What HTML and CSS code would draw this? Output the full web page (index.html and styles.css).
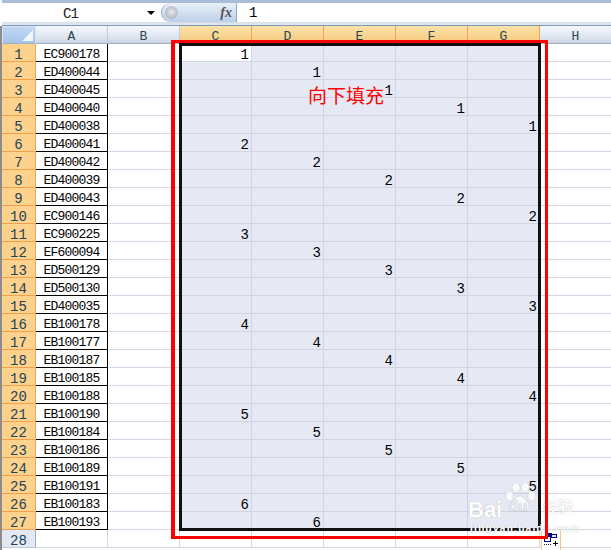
FILE: index.html
```html
<!DOCTYPE html>
<html lang="zh">
<head>
<meta charset="utf-8">
<title>向下填充</title>
<link rel="stylesheet" href="styles.css">
</head>
<body>
<div class="formula">
  <div class="namebox"><span class="name">C1</span><span class="arrow"></span></div>
  <div class="pill"><span class="knob"></span><span class="fx">fx</span></div>
  <div class="input">1</div>
</div>
<div class="gap"></div>
<div class="sheet">
  <table class="grid">
    <colgroup><col class="c0"><col class="cw"><col class="cw"><col class="cw"><col class="cw"><col class="cw"><col class="cw"><col class="cw"><col class="cw"></colgroup>
    <thead>
      <tr>
        <th class="corner"><svg width="32" height="16" viewBox="0 0 32 16"><polygon points="30,3 30,14 19,14" fill="#f2f6fb"/></svg></th>
        <th>A</th><th>B</th><th class="on">C</th><th class="on">D</th><th class="on">E</th><th class="on">F</th><th class="on">G</th><th>H</th>
      </tr>
    </thead>
    <tbody>
      <tr><th class="rh">1</th><td class="id">EC900178</td><td></td><td class="first">1</td><td class="s"></td><td class="s"></td><td class="s"></td><td class="s"></td><td></td></tr>
      <tr><th class="rh">2</th><td class="id">ED400044</td><td></td><td class="s"></td><td class="s">1</td><td class="s"></td><td class="s"></td><td class="s"></td><td></td></tr>
      <tr><th class="rh">3</th><td class="id">ED400045</td><td></td><td class="s"></td><td class="s"></td><td class="s">1</td><td class="s"></td><td class="s"></td><td></td></tr>
      <tr><th class="rh">4</th><td class="id">ED400040</td><td></td><td class="s"></td><td class="s"></td><td class="s"></td><td class="s">1</td><td class="s"></td><td></td></tr>
      <tr><th class="rh">5</th><td class="id">ED400038</td><td></td><td class="s"></td><td class="s"></td><td class="s"></td><td class="s"></td><td class="s">1</td><td></td></tr>
      <tr><th class="rh">6</th><td class="id">ED400041</td><td></td><td class="s">2</td><td class="s"></td><td class="s"></td><td class="s"></td><td class="s"></td><td></td></tr>
      <tr><th class="rh">7</th><td class="id">ED400042</td><td></td><td class="s"></td><td class="s">2</td><td class="s"></td><td class="s"></td><td class="s"></td><td></td></tr>
      <tr><th class="rh">8</th><td class="id">ED400039</td><td></td><td class="s"></td><td class="s"></td><td class="s">2</td><td class="s"></td><td class="s"></td><td></td></tr>
      <tr><th class="rh">9</th><td class="id">ED400043</td><td></td><td class="s"></td><td class="s"></td><td class="s"></td><td class="s">2</td><td class="s"></td><td></td></tr>
      <tr><th class="rh">10</th><td class="id">EC900146</td><td></td><td class="s"></td><td class="s"></td><td class="s"></td><td class="s"></td><td class="s">2</td><td></td></tr>
      <tr><th class="rh">11</th><td class="id">EC900225</td><td></td><td class="s">3</td><td class="s"></td><td class="s"></td><td class="s"></td><td class="s"></td><td></td></tr>
      <tr><th class="rh">12</th><td class="id">EF600094</td><td></td><td class="s"></td><td class="s">3</td><td class="s"></td><td class="s"></td><td class="s"></td><td></td></tr>
      <tr><th class="rh">13</th><td class="id">ED500129</td><td></td><td class="s"></td><td class="s"></td><td class="s">3</td><td class="s"></td><td class="s"></td><td></td></tr>
      <tr><th class="rh">14</th><td class="id">ED500130</td><td></td><td class="s"></td><td class="s"></td><td class="s"></td><td class="s">3</td><td class="s"></td><td></td></tr>
      <tr><th class="rh">15</th><td class="id">ED400035</td><td></td><td class="s"></td><td class="s"></td><td class="s"></td><td class="s"></td><td class="s">3</td><td></td></tr>
      <tr><th class="rh">16</th><td class="id">EB100178</td><td></td><td class="s">4</td><td class="s"></td><td class="s"></td><td class="s"></td><td class="s"></td><td></td></tr>
      <tr><th class="rh">17</th><td class="id">EB100177</td><td></td><td class="s"></td><td class="s">4</td><td class="s"></td><td class="s"></td><td class="s"></td><td></td></tr>
      <tr><th class="rh">18</th><td class="id">EB100187</td><td></td><td class="s"></td><td class="s"></td><td class="s">4</td><td class="s"></td><td class="s"></td><td></td></tr>
      <tr><th class="rh">19</th><td class="id">EB100185</td><td></td><td class="s"></td><td class="s"></td><td class="s"></td><td class="s">4</td><td class="s"></td><td></td></tr>
      <tr><th class="rh">20</th><td class="id">EB100188</td><td></td><td class="s"></td><td class="s"></td><td class="s"></td><td class="s"></td><td class="s">4</td><td></td></tr>
      <tr><th class="rh">21</th><td class="id">EB100190</td><td></td><td class="s">5</td><td class="s"></td><td class="s"></td><td class="s"></td><td class="s"></td><td></td></tr>
      <tr><th class="rh">22</th><td class="id">EB100184</td><td></td><td class="s"></td><td class="s">5</td><td class="s"></td><td class="s"></td><td class="s"></td><td></td></tr>
      <tr><th class="rh">23</th><td class="id">EB100186</td><td></td><td class="s"></td><td class="s"></td><td class="s">5</td><td class="s"></td><td class="s"></td><td></td></tr>
      <tr><th class="rh">24</th><td class="id">EB100189</td><td></td><td class="s"></td><td class="s"></td><td class="s"></td><td class="s">5</td><td class="s"></td><td></td></tr>
      <tr><th class="rh">25</th><td class="id">EB100191</td><td></td><td class="s"></td><td class="s"></td><td class="s"></td><td class="s"></td><td class="s">5</td><td></td></tr>
      <tr><th class="rh">26</th><td class="id">EB100183</td><td></td><td class="s">6</td><td class="s"></td><td class="s"></td><td class="s"></td><td class="s"></td><td></td></tr>
      <tr><th class="rh">27</th><td class="id">EB100193</td><td></td><td class="s"></td><td class="s">6</td><td class="s"></td><td class="s"></td><td class="s"></td><td></td></tr>
      <tr><th class="rh off">28</th><td></td><td></td><td></td><td></td><td></td><td></td><td></td><td></td></tr>
    </tbody>
  </table>
  <div class="selection"></div>
  <div class="watermark">
    <svg class="paw" width="30" height="30" viewBox="0 0 46 46"><g fill="#fff" fill-opacity=".75" stroke="#9a9a9a" stroke-opacity=".35"><ellipse cx="7" cy="20" rx="6" ry="7.500"/><ellipse cx="17" cy="7" rx="6" ry="7.500"/><ellipse cx="31" cy="7" rx="6" ry="7.500"/><ellipse cx="41" cy="20" rx="6" ry="7.500"/><path d="M23 20c-6 0-8 6-12 10-4 5-1 13 5 13 3 0 5-1 7-1s5 1 8 1c6 0 8-8 4-13-4-4-6-10-12-10z"/></g></svg>
    <span class="wm-bai">Bai</span><span class="wm-du">du</span><span class="wm-jy">经验</span>
    <span class="wm-url">jingyan.baidu.com</span>
  </div>
  <div class="autofill">
    <svg width="18" height="18" viewBox="0 0 18 18"><rect x="2.500" y="5.500" width="6" height="5" fill="#fff" stroke="#00008b"/><rect x="6" y="2" width="4" height="4" fill="#00008b"/><rect x="9.500" y="3.500" width="5" height="3" fill="#dfe8f8" stroke="#00008b"/><path d="M2 13.500h1M4 13.500h1M6 13.500h1M8 13.500h1" stroke="#222" fill="none"/><path d="M11 12.500h5M13.500 10v5" stroke="#000" fill="none"/></svg>
  </div>
  <div class="redbox"></div>
  <div class="note">向下填充</div>
</div>
</body>
</html>
```
FILE: styles.css
```css
html, body {
  margin: 0;
  padding: 0;
  width: 611px;
  height: 550px;
  overflow: hidden;
  background: #fff;
  font-family: "Liberation Mono", "DejaVu Sans Mono", monospace;
}
.formula {
  display: flex;
  height: 19px;
  margin-left: 2px;
  background: #fff;
  border-top: 3px solid #a9bdd6;
  border-bottom: 1px solid #d8dee6;
  color: #000;
}
.namebox {
  width: 159px;
  display: flex;
  align-items: center;
  font-size: 14px;
  flex: none;
}
.name {
  margin-left: 61px;
  padding-top: 2px;
  letter-spacing: -.9px;
  color: #222;
}
.arrow {
  margin-left: 69px;
  width: 0;
  height: 0;
  border-left: 4px solid transparent;
  border-right: 4px solid transparent;
  border-top: 4px solid #000;
}
.pill {
  position: relative;
  width: 76px;
  flex: none;
  display: flex;
  align-items: center;
  justify-content: flex-end;
  box-sizing: border-box;
  border-radius: 10px 0 0 10px;
  border: 1px solid #8fa9ca;
  border-width: 0 1px 0 1px;
  background: linear-gradient(#eaf1fa, #bccfe8);
}
.knob {
  position: absolute;
  left: 3px;
  top: 3px;
  width: 13px;
  height: 13px;
  border-radius: 50%;
  background: radial-gradient(circle at 50% 45%, #e8eaee, #9ca3ad);
}
.fx {
  font: italic bold 14px "Liberation Serif", serif;
  color: #555;
  margin-right: 4px;
}
.input {
  flex: 1;
  padding: 1px 0 0 12px;
  font-size: 14px;
  line-height: 19px;
}
.gap {
  height: 2px;
  margin-left: 2px;
  background: #dfe5ed;
  border-bottom: 1px solid #7f9ab8;
}
.sheet {
  position: relative;
  background: #fff;
  border-left: 2px solid #8c8c8c;
  height: 524px;
}
.grid {
  border-collapse: separate;
  border-spacing: 0;
  table-layout: fixed;
  width: 609px;
}
.c0 { width: 34px; }
.cw { width: 72px; }
th, td {
  box-sizing: border-box;
  padding: 5px 0 0;
  height: 18px;
  line-height: 12px;
  font-size: 14px;
  font-weight: normal;
}
thead th {
  color: #2b4650;
  font-size: 13px;
  text-align: center;
  background: linear-gradient(#f4f7fc, #dde4ef 70%, #c8d3e2);
  border-right: 1px solid #c0cad8;
  border-bottom: 1px solid #9fb0c6;
}
thead th.on {
  background: linear-gradient(#fae2a8, #f7c97e);
  border-right-color: #f0a050;
  border-bottom-color: #f0a050;
}
thead th.corner {
  padding: 0;
  background: linear-gradient(#c2d7f2, #a6c3ea);
  border: 1px solid #d5e3f5;
  border-bottom-color: #9fb0c6;
  line-height: 0;
}
.rh {
  text-align: center;
  color: #23435a;
  background: #fdd28c;
  border-right: 1px solid #f0a050;
  border-bottom: 1px solid #f0a050;
}
.rh.off {
  background: #e2e9f4;
  border-right-color: #9fb0c6;
  border-bottom-color: #c0cad8;
}
td {
  text-align: right;
  padding-right: 2px;
  color: #000;
  border-right: 1px solid #d0d7e5;
  border-bottom: 1px solid #d0d7e5;
}
td.s {
  background: #e6e9f3;
  border-color: #d0d4e2;
}
td.id {
  font-size: 13px;
  letter-spacing: -.8px;
  text-align: center;
  padding-right: 0;
  padding-top: 4px;
  border-right: 1px solid #000;
  border-bottom: 1px solid #000;
}
.selection {
  position: absolute;
  left: 177px;
  top: 17px;
  width: 362px;
  height: 488px;
  border: 3px solid #111;
  box-sizing: border-box;
}
.redbox {
  position: absolute;
  left: 169px;
  top: 14px;
  width: 377px;
  height: 499px;
  border: 3px solid #f00;
  border-left-width: 4px;
  box-sizing: border-box;
}
.note {
  position: absolute;
  left: 306px;
  top: 57px;
  font: 19px/24px "Noto Sans CJK SC", sans-serif;
  color: #f00;
  white-space: nowrap;
}
.watermark {
  position: absolute;
  left: 466px;
  top: 460px;
  width: 110px;
  height: 60px;
  color: #fff;
  font-family: "Liberation Sans", sans-serif;
  text-shadow: 0 0 1px rgba(110, 110, 110, .55);
}
.paw {
  position: absolute;
  left: 37px;
  top: -3px;
}
.wm-bai {
  position: absolute;
  left: 0;
  top: 11px;
  font-size: 22px;
  font-weight: bold;
}
.wm-du {
  position: absolute;
  left: 41px;
  top: 11px;
  font-size: 15px;
  font-weight: bold;
  color: #e6e9f3;
}
.wm-jy {
  position: absolute;
  left: 75px;
  top: 9px;
  font: bold 15px "Noto Sans CJK SC", sans-serif;
}
.wm-url {
  position: absolute;
  left: 2px;
  top: 37px;
  font-size: 10px;
  font-weight: bold;
  letter-spacing: 1.3px;
  white-space: nowrap;
}
.autofill {
  position: absolute;
  left: 539px;
  top: 505px;
  width: 20px;
  height: 20px;
  box-sizing: border-box;
  border: 1px solid #f5c58a;
  border-top: 0;
  line-height: 0;
  background: #fff;
}
```
